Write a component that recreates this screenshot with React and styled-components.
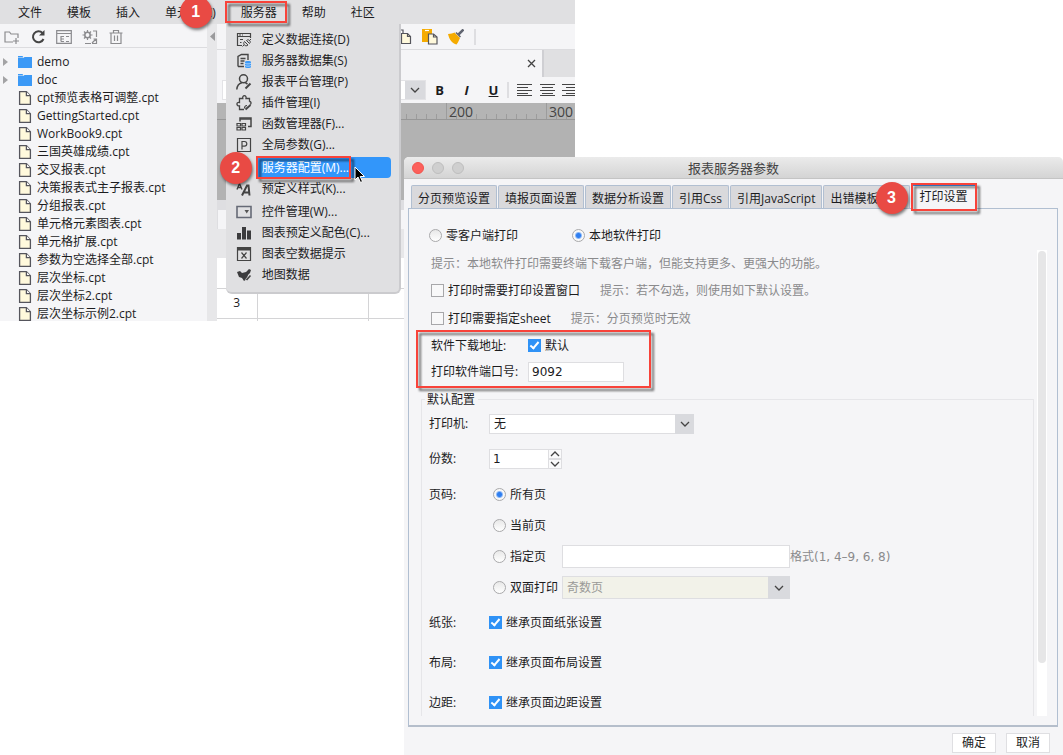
import React, { useState } from 'react';
import styled, { createGlobalStyle, css } from 'styled-components';

const GlobalStyle = createGlobalStyle`
  * {
    box-sizing: border-box;
  }
  body {
    margin: 0;
    background: #fff;
  }
  body, button, input, select {
    font-family: 'Open Sans', 'Noto Sans CJK SC', sans-serif;
    font-size: 12px;
    color: #1c1c1e;
  }
  svg {
    display: block;
    flex: none;
  }
`;

const Page = styled.div`
  position: relative;
  min-height: 100vh;
  line-height: 18px;
`;

/* ---------- annotations ---------- */

const Marker = styled.span`
  position: absolute;
  z-index: 3;
  display: flex;
  align-items: center;
  justify-content: center;
  width: 32px;
  height: 32px;
  border-radius: 50%;
  background: #e94a44;
  box-shadow: 1px 2px 3px rgba(0, 0, 0, 0.5);
  color: #fff;
  font: bold 16px 'Liberation Sans', sans-serif;
  left: ${(p) => p.$left}px;
  top: ${(p) => p.$top}px;
`;

const Outline = styled.span`
  position: absolute;
  z-index: 2;
  inset: ${(p) => p.$inset};
  width: ${(p) => (p.$width ? `${p.$width}px` : 'auto')};
  border: 2px solid #f8433a;
  filter: drop-shadow(3px 3px 1px rgba(0, 0, 0, 0.55));
  pointer-events: none;
`;

/* ---------- designer window ---------- */

const Designer = styled.div`
  display: flex;
  flex-direction: column;
  width: 54.1%;
  height: 321px;
  overflow: hidden;
  background: #f5f5f7;
`;

const MenuBar = styled.nav`
  position: relative;
  z-index: 2;
  display: flex;
  flex: none;
  gap: 25px;
  height: 24px;
  padding-left: 18px;
  background: #e0e0e2;
`;

const MenuSlot = styled.div`
  position: relative;
  display: flex;
`;

const MenuButton = styled.button`
  padding: 1px 0 0;
  border: 0;
  background: none;
  line-height: 23px;
  white-space: nowrap;
`;

const Dropdown = styled.div`
  position: absolute;
  top: 24px;
  left: -15px;
  width: 175px;
  padding: 5px 8px 7px 0;
  border: solid #cbcbce;
  border-width: 0 2px 2px 0;
  border-radius: 0 0 6px 6px;
  background: #e0e0e2;
  display: flex;
  flex-direction: column;
  gap: 2px;
`;

const MenuRow = styled.div`
  position: relative;
  display: flex;
  align-items: center;
  height: 21px;
  padding-left: 10px;
`;

const MenuIcon = styled.span`
  width: 22px;
  flex: none;
`;

const MenuEntry = styled.button`
  flex: 1;
  height: 21px;
  padding: 0 0 0 4px;
  border: 0;
  border-radius: 0 4px 4px 0;
  background: ${(p) => (p.$active ? '#3296fa' : 'none')};
  color: ${(p) => (p.$active ? '#fff' : '#1c1c1e')};
  text-align: left;
  white-space: nowrap;
  line-height: 21px;
`;

const Cursor = styled.svg`
  position: absolute;
  z-index: 3;
  left: 128px;
  top: 9px;
`;

const Workspace = styled.div`
  display: flex;
  flex: 1;
  min-height: 0;
`;

const Sidebar = styled.aside`
  width: 207px;
  flex: none;
`;

const SideTools = styled.div`
  display: flex;
  align-items: center;
  gap: 10px;
  height: 24px;
  padding: 2px 0 0 4px;
  border-bottom: 1px solid #dcdcdf;
`;

const ToolButton = styled.button`
  display: flex;
  align-items: center;
  justify-content: center;
  width: ${(p) => p.$width || 16}px;
  flex: none;
  padding: 0;
  border: 0;
  background: none;
  font-size: 13px;
`;

const Tree = styled.ul`
  margin: 0;
  padding: 5px 0 0;
  list-style: none;
`;

const TreeItem = styled.li`
  display: flex;
  align-items: center;
  height: 18px;
  white-space: nowrap;
`;

const Twisty = styled.span`
  width: 18px;
  padding-left: 3px;
`;

const FileIcon = styled.span`
  width: 19px;
`;

const Splitter = styled.div`
  display: flex;
  justify-content: center;
  width: 10px;
  flex: none;
  padding-top: 8px;
  background: #e7e7e9;
`;

const Editor = styled.main`
  display: flex;
  flex-direction: column;
  flex: 1;
  min-width: 0;
  overflow: hidden;
`;

const EditorTools = styled.div`
  display: flex;
  align-items: center;
  gap: 10px;
  height: 26px;
  flex: none;
  padding-left: 179px;
  border-bottom: 1px solid #dcdcdf;
`;

const Divider = styled.span`
  width: 2px;
  height: 16px;
  flex: none;
  background: #dedee1;
`;

const DocTabs = styled.div`
  display: flex;
  height: 27px;
  flex: none;
  background: #e0e0e2;
`;

const DocTab = styled.div`
  display: flex;
  align-items: center;
  justify-content: flex-end;
  width: 327px;
  flex: none;
  padding-right: 3px;
  border-right: 2px solid #cfcfd3;
  background: #f5f5f7;
`;

const FormatBar = styled.div`
  display: flex;
  align-items: center;
  height: 26px;
  flex: none;
  padding-left: 5px;
  color: #333;
`;

const FontBox = styled.div`
  display: flex;
  justify-content: flex-end;
  width: 204px;
  height: 20px;
  flex: none;
  border: 1px solid #e3e3e6;
  background: #fff;
`;

const DropButton = styled.button`
  display: flex;
  align-items: center;
  justify-content: center;
  width: 20px;
  padding: 0;
  border: 0;
  background: #d9dade;
`;

const Ruler = styled.div`
  display: flex;
  justify-content: flex-end;
  height: 17px;
  flex: none;
  border-bottom: 1px solid #979797;
  background: #b4b4b4;
  color: #444;
`;

const RulerMark = styled.span`
  width: ${(p) => p.$width}px;
  flex: none;
  padding-left: 2px;
  border-left: 1px solid #9c9c9c;
  background: repeating-linear-gradient(90deg, transparent 0 9px, #9c9c9c 9px 10px) left bottom / 100% 5px no-repeat;
  font-size: 14px;
  line-height: 17px;
`;

const Canvas = styled.div`
  height: 80px;
  flex: none;
  background: #b2b2b2;
`;

const SheetBar = styled.div`
  height: 29px;
  flex: none;
  padding: 10px 0 0 1px;
  background: #dedee1;
`;

const SheetInput = styled.div`
  height: 19px;
  background: #f5f5f7;
`;

const Sheet = styled.table`
  width: 480px;
  flex: none;
  border-collapse: collapse;
  table-layout: fixed;
  background: #fff;

  th, td {
    height: 30px;
    padding: 0;
    border: solid #d4d4d6;
    border-width: 0 1px 1px 0;
    font-weight: normal;
  }
  thead th {
    height: 29px;
    background: #e7e7e9;
    border: 0;
  }
`;

/* ---------- dialog ---------- */

const Dialog = styled.section`
  position: absolute;
  z-index: 4;
  top: 157px;
  right: 0;
  bottom: 0;
  left: 404px;
  display: flex;
  flex-direction: column;
  min-height: 598px;
  border-radius: 5px 5px 0 0;
  background: #f5f5f7;
`;

const TitleBar = styled.header`
  position: relative;
  height: 22px;
  flex: none;
  border-bottom: 1px solid #c4c4c4;
  border-radius: 5px 5px 0 0;
  background: linear-gradient(#ebebeb, #d4d4d4);
  color: #444;
  font-size: 13px;
  line-height: 22px;
  text-align: center;
`;

const Lights = styled.div`
  position: absolute;
  top: 5px;
  left: 8px;
  display: flex;
  gap: 8px;
`;

const Light = styled.button`
  width: 12px;
  height: 12px;
  padding: 0;
  border: 1px solid ${(p) => (p.$close ? '#f2544d' : '#bebebe')};
  border-radius: 50%;
  background: ${(p) => (p.$close ? '#fc605b' : '#cfcfcf')};
`;

const TabBar = styled.div`
  display: flex;
  align-items: flex-end;
  gap: 1px;
  height: 29px;
  flex: none;
  padding: 0 6px 0 7px;
`;

const tabActive = css`
  z-index: 1;
  height: 25px;
  margin-bottom: -1px;
  padding: 0 8px 4px;
  border-top: 2px solid #3c8ae0;
  background: #f5f5f7;
`;

const Tab = styled.button`
  position: relative;
  height: 23px;
  padding: 2px 6px 0;
  border: 1px solid #b1bfd1;
  border-bottom: 0;
  border-radius: 2px 2px 0 0;
  background: #d9d9dc;
  white-space: nowrap;
  ${(p) => p.$active && tabActive}
`;

const Panel = styled.div`
  display: flex;
  flex-direction: column;
  flex: 1;
  min-height: 0;
  margin: 0 5px 0 4px;
  padding: 12px 10px 9px 0;
  border: 1px solid #b1bfd1;
  border-bottom: 2px solid #b5becb;
`;

const ModeRow = styled.div`
  display: flex;
  align-items: center;
  gap: 54px;
  height: 29px;
  flex: none;
  padding-left: 20px;
`;

const ScrollArea = styled.div`
  display: flex;
  flex: 1;
  min-height: 0;
  padding-left: 12px;
  overflow: hidden;
`;

const ScrollContent = styled.div`
  flex: 1;
  min-width: 0;
`;

const Scrollbar = styled.div`
  width: 10px;
  flex: none;
  margin-left: 3px;
  padding: 1px;
  background: #fff;
`;

const Thumb = styled.div`
  height: 412px;
  border-radius: 4px;
  background: #e6e6e7;
`;

const OptionRow = styled.div`
  display: flex;
  align-items: center;
  gap: 20px;
  height: ${(p) => p.$height}px;
  padding-left: 10px;
  white-space: nowrap;
`;

const Hint = styled.span`
  color: #8a8a8c;
`;

const Marked = styled.div`
  position: relative;
`;

const CaptionRow = styled.div`
  display: flex;
  align-items: center;
  height: 26px;
  padding-left: 10px;
`;

const Caption = styled.label`
  width: ${(p) => p.$width}px;
  flex: none;
`;

const CheckLabel = styled.label`
  display: flex;
  align-items: center;
  gap: 4px;
  white-space: nowrap;
`;

const RadioInput = styled.input.attrs({ type: 'radio' })`
  appearance: none;
  width: 13px;
  height: 13px;
  flex: none;
  margin: 0;
  border: 1px solid #a9a9ab;
  border-radius: 50%;
  background: linear-gradient(#e8e8e8, #fff);

  &:checked {
    background: radial-gradient(circle, #2f7ef0 0 2px, #8db9f7 3px, #f8f8f8 4px);
  }
`;

const CheckInput = styled.input.attrs({ type: 'checkbox' })`
  appearance: none;
  position: relative;
  width: 13px;
  height: 13px;
  flex: none;
  margin: 0 0 1px;
  border: 1px solid #a7a7aa;
  background: #f8f8f9;

  &:checked {
    border-color: #2f92f6;
    background: #2f92f6;
  }
  &:checked::after {
    content: '';
    box-sizing: border-box;
    position: absolute;
    left: 3px;
    top: 0;
    width: 5px;
    height: 9px;
    border: solid #fff;
    border-width: 0 2px 2px 0;
    transform: rotate(40deg);
  }
`;

const TextInput = styled.input`
  width: ${(p) => p.$width}px;
  height: ${(p) => p.$height || 20}px;
  padding: 0 3px;
  border: 1px solid #dedee1;
  background: #fff;
  font-family: 'DejaVu Sans', 'Noto Sans CJK SC', sans-serif;
  outline: none;
`;

const Group = styled.fieldset`
  min-width: 0;
  margin: 7px 0 0;
  padding: 0 0 0 7px;
  border: 1px solid #e6e6e9;
`;

const Legend = styled.legend`
  height: 14px;
  margin-left: -4px;
  padding: 0 3px 0 2px;
  line-height: 16px;
`;

const FieldRow = styled.div`
  display: flex;
  align-items: center;
  height: ${(p) => p.$height}px;
`;

const PageRange = styled.div`
  display: flex;
  padding-top: 3px;
`;

const RangeCaption = styled.span`
  width: 60px;
  flex: none;
  line-height: 31px;
`;

const RangeRow = styled.div`
  display: flex;
  align-items: center;
  height: 31px;
  padding-left: 4px;
`;

const RangeLabel = styled(CheckLabel)`
  width: 69px;
`;

const Format = styled(Hint)`
  font-family: 'DejaVu Sans', 'Noto Sans CJK SC', sans-serif;
`;

const SelectWrap = styled.div`
  position: relative;
  width: ${(p) => p.$width}px;
  height: ${(p) => p.$height}px;
`;

const Select = styled.select`
  appearance: none;
  width: 100%;
  height: 100%;
  padding: 0 4px;
  border: 1px solid #dedee1;
  border-radius: 0;
  background: #fff;
  opacity: 1;

  &:disabled {
    background: #f2f2e9;
    color: #9a9a98;
  }
`;

const SelectArrow = styled.span`
  position: absolute;
  top: 0;
  right: 0;
  display: flex;
  align-items: center;
  justify-content: center;
  width: ${(p) => p.$width}px;
  height: 100%;
  background: #d9dade;
  pointer-events: none;
`;

const Spinner = styled.div`
  display: flex;
  flex-direction: column;
  height: 20px;
`;

const SpinButton = styled.button`
  display: flex;
  align-items: center;
  justify-content: center;
  width: 13px;
  height: 10px;
  padding: 0;
  border: 1px solid #dedee1;
  border-left: 0;
  background: #fafafb;
`;

const Footer = styled.footer`
  display: flex;
  justify-content: flex-end;
  gap: 10px;
  height: 28px;
  flex: none;
  padding: 6px 13px 0 0;
`;

const DialogButton = styled.button`
  width: 44px;
  height: 20px;
  padding: 0;
  border: 1px solid #dfdfe2;
  background: #fff;
  line-height: 18px;
`;

/* ---------- icons ---------- */

const Icon = ({ size = 16, color = '#444', children }) => (
  <svg width={size} height={size} viewBox="0 0 16 16" fill="none" stroke={color} strokeWidth="1.2">
    {children}
  </svg>
);

const Chevron = ({ up }) => (
  <svg width="10" height="6" viewBox="0 0 10 6" fill="none" stroke="#444" strokeWidth="1.3">
    <path d={up ? 'M1 5l4-4 4 4' : 'M1 1l4 4 4-4'} />
  </svg>
);

const FolderGlyph = () => (
  <svg width="15" height="14" viewBox="0 0 15 14" fill="#3b99f6">
    <path d="M0 1h4.5l1 1.5H0z" />
    <path d="M0 3h5.5l1-1H14v11H0z" />
  </svg>
);

const FileGlyph = () => (
  <svg width="14" height="14" viewBox="0 0 14 14" fill="#fff9dc" stroke="#55555c" strokeWidth="1.3">
    <path d="M1.6.7h6.8l4 4v8.6H1.6z" />
    <path d="M8.4.7v4h4" fill="#fff" />
  </svg>
);

const menuIcons = {
  link: (
    <Icon>
      <path d="M6 13.5H1.5v-12h13V6M1.5 4.5h13M4 7.500h3M4 10.500h1.500" />
      <path d="M3 3h2M6 3h1" />
      <path d="M6.500 14.500l1.500-1.500M8.500 9.500l3.500 3.500c-1.200 1.200-2.800 1-3.600 0s-1-2.300.1-3.500zM10.500 8.500l3 3c1-1 1-2.200.1-3s-2.100-1-3.100 0zM13.500 8.500l1.500-1.500" strokeWidth="1" />
    </Icon>
  ),
  dataset: (
    <Icon>
      <path d="M2 13.500v-10l3.500-2H12V7M2 13.500h6M4.500 5.500h5M4.500 8h4M4.500 10.500h3" strokeWidth="1.400" />
      <path d="M9 9c0-1.300 6-1.300 6 0v5c0 1.300-6 1.300-6 0z" fill="#3b99f6" stroke="none" />
      <path d="M9 10.200c1 .9 5 .9 6 0M9 12.500c1 .9 5 .9 6 0" stroke="#d9eafc" strokeWidth=".7" />
    </Icon>
  ),
  user: (
    <Icon>
      <circle cx="7.500" cy="4.800" r="4" strokeWidth="1.500" />
      <path d="M.8 15.500c.3-3.500 2.300-6 5-6.700M9.500 8.800l2 1.200" strokeWidth="1.500" />
      <path d="M9.500 14.500l5-5" strokeWidth="2" />
    </Icon>
  ),
  plugin: (
    <Icon>
      <path d="M8 14.500H3.500v-3.700c-3.200.9-3.600-4.300 0-3.300V3.500H6.800c-1-3.800 4.200-3.800 3.200 0h3.500v3.200M13.500 6.500c2 0 2 2.500.5 3" strokeWidth="1.300" />
      <path d="M9.500 14.500l5-4.500" strokeWidth="1.800" />
      <path d="M8.500 13.500c0-2 1-3 2.500-3" />
    </Icon>
  ),
  func: (
    <Icon>
      <path d="M4 5.500V2h11v8.500h-3" strokeWidth="1.500" />
      <path d="M4 3h11" strokeWidth="1.500" />
      <path d="M1 7.500h3.500v2.500H1zM6 7.500h3.500v2.500H6zM1 11.500h3.500V14H1zM6 11.500h3.500V14H6z" />
    </Icon>
  ),
  param: (
    <Icon>
      <path d="M1.500 1.500h13v13h-13z" />
      <path d="M6 12.500V4.500h2.500a2.300 2.300 0 010 4.600H6" />
    </Icon>
  ),
  style: (
    <Icon>
      <path d="M1 8.500L3.500 2.500 6 8.500M2 6.500h3" strokeWidth="1.400" />
      <path d="M6 14.500l5-10h1.500l1 10M8 11.500h5.500" strokeWidth="2" />
    </Icon>
  ),
  widget: (
    <Icon color="#666a76">
      <path d="M1 2.500h14v11H1z" strokeWidth="1.600" />
      <path d="M8.500 6h4.500l-2.250 3.500z" fill="#555" stroke="none" />
    </Icon>
  ),
  chart: (
    <Icon>
      <path d="M1 8h4v6.500H1zM6 2h4v12.500H6zM11 5.500h4v9h-4z" fill="#3c3c3e" stroke="none" />
    </Icon>
  ),
  empty: (
    <Icon>
      <path d="M1.500 1.500h13v13h-13z" />
      <path d="M1.500 3h13" strokeWidth="3" />
      <path d="M5.500 6.500l5 6M10.500 6.500l-5 6" />
    </Icon>
  ),
  map: (
    <Icon>
      <path d="M1 5l3-1 2 2 4-1 3-3 2 1-1 3-2 2-1 4-3 2-2-3-3-1z" fill="#3c3c3e" stroke="none" />
      <path d="M9.500 12.500l4-4.500" stroke="#e0e0e2" strokeWidth="1" />
      <path d="M10.500 13l4-4.500" strokeWidth="1.600" />
    </Icon>
  ),
};

const AlignGlyph = ({ d }) => (
  <svg width="15" height="12" viewBox="0 0 15 12" stroke="#444" strokeWidth="1">
    <path d={d} />
  </svg>
);

/* ---------- data ---------- */

const menuGroups = [
  [
    ['link', '定义数据连接(D)'],
    ['dataset', '服务器数据集(S)'],
    ['user', '报表平台管理(P)'],
    ['plugin', '插件管理(I)'],
    ['func', '函数管理器(F)...'],
    ['param', '全局参数(G)...'],
  ],
  [
    ['', '服务器配置(M)...'],
    ['style', '预定义样式(K)...'],
  ],
  [
    ['widget', '控件管理(W)...'],
    ['chart', '图表预定义配色(C)...'],
    ['empty', '图表空数据提示'],
    ['map', '地图数据'],
  ],
];

const folders = ['demo', 'doc'];

const files = [
  'cpt预览表格可调整.cpt',
  'GettingStarted.cpt',
  'WorkBook9.cpt',
  '三国英雄成绩.cpt',
  '交叉报表.cpt',
  '决策报表式主子报表.cpt',
  '分组报表.cpt',
  '单元格元素图表.cpt',
  '单元格扩展.cpt',
  '参数为空选择全部.cpt',
  '层次坐标.cpt',
  '层次坐标2.cpt',
  '层次坐标示例2.cpt',
];

const tabs = ['分页预览设置', '填报页面设置', '数据分析设置', '引用Css', '引用JavaScript', '出错模板定义', '打印设置'];

const inheritRows = [
  ['纸张:', '继承页面纸张设置'],
  ['布局:', '继承页面布局设置'],
  ['边距:', '继承页面边距设置'],
];

/* ---------- components ---------- */

function ServerMenu() {
  return (
    <Dropdown>
      {menuGroups.map((group, i) => (
        <div key={i}>
          {group.map(([icon, text]) => {
            const active = text.startsWith('服务器配置');
            return (
              <MenuRow key={text}>
                <MenuIcon>{menuIcons[icon]}</MenuIcon>
                <MenuEntry $active={active}>{text}</MenuEntry>
                {active && (
                  <>
                    <Outline $inset="-1px 40px -1px 30px" />
                    <Marker $left={-6} $top={-5}>2</Marker>
                    <Cursor width="12" height="18" viewBox="0 0 12 18" fill="#000" stroke="#fff">
                      <path d="M1 1v13l3-3 2.500 5.500 2-1L6.200 10.500h4.300z" />
                    </Cursor>
                  </>
                )}
              </MenuRow>
            );
          })}
        </div>
      ))}
    </Dropdown>
  );
}

function FileTree() {
  return (
    <Sidebar>
      <SideTools>
        <ToolButton aria-label="新建目录">
          <Icon color="#8b8b8e">
            <path d="M9 13H1V3h4.500l1.500 2h7v4M12 9v6M9 12h6" />
          </Icon>
        </ToolButton>
        <ToolButton aria-label="刷新">
          <Icon color="#444">
            <path d="M12.500 4A5.500 5.500 0 1013.500 10" strokeWidth="2" />
            <path d="M14.500 1v5.500H9z" fill="#444" stroke="none" />
          </Icon>
        </ToolButton>
        <ToolButton aria-label="展开">
          <Icon color="#8b8b8e">
            <path d="M.7 1.700h14.600v12.600H.7zM.7 4.500h14.600M5 7v5.500M5 7.500h3M5 10h3M5 12.500h3M10 7.500h3M10 12.500h3" />
          </Icon>
        </ToolButton>
        <ToolButton aria-label="设置">
          <Icon color="#8b8b8e">
            <circle cx="5.500" cy="6" r="2.700" strokeWidth="1.600" />
            <path d="M5.500 1v2M5.500 9v2M.5 6h2M8.500 6h2M2 2.500l1.500 1.500M9 2.500L7.500 4M2 9.500L3.500 8M9 9.500L7.500 8M11 2h3.500v6M3 14.500h6M10 14.500h4.500V10h-3M10 14l4-4" />
          </Icon>
        </ToolButton>
        <ToolButton aria-label="删除">
          <Icon color="#8b8b8e">
            <path d="M1.500 4h13M5.500 4V1.500h5V4M3 4v10.500h10V4M6.500 6.500v5.500M9.500 6.500v5.500" />
          </Icon>
        </ToolButton>
      </SideTools>
      <Tree>
        {folders.map((name) => (
          <TreeItem key={name}>
            <Twisty>
              <svg width="5" height="8" viewBox="0 0 5 8" fill="#a3a3a5"><path d="M0 0l5 4-5 4z" /></svg>
            </Twisty>
            <FileIcon><FolderGlyph /></FileIcon>
            {name}
          </TreeItem>
        ))}
        {files.map((name) => (
          <TreeItem key={name}>
            <Twisty />
            <FileIcon><FileGlyph /></FileIcon>
            {name}
          </TreeItem>
        ))}
      </Tree>
    </Sidebar>
  );
}

function ReportEditor() {
  return (
    <Editor>
      <EditorTools>
        <ToolButton aria-label="复制">
          <Icon color="#55555c">
            <path d="M1 1h6v10H1z" fill="#fff" />
            <path d="M5.500 4.500h6l3 3v7h-9z" fill="#fff9dc" />
            <path d="M11.500 4.500v3h3" />
          </Icon>
        </ToolButton>
        <ToolButton aria-label="粘贴">
          <Icon color="#55555c">
            <path d="M0 0h10v13H0z" fill="#f5ab00" stroke="none" />
            <path d="M3 1.500h4" stroke="#fff" />
            <path d="M6.500 5h5l3.500 3v7H6.500z" fill="#fff9dc" />
            <path d="M11.500 5v3H15" />
          </Icon>
        </ToolButton>
        <ToolButton aria-label="格式刷">
          <Icon color="#606470">
            <path d="M0 5c3 0 5-1 6.500-1.500L12 9c-1 2-1.500 4-3.500 6.500C4.500 15 1 10 0 5z" fill="#f5ab00" stroke="none" />
            <path d="M8 3.500l4.500 4.500" stroke="#606470" strokeWidth="1.500" />
            <path d="M15.500 .5l-5 5" strokeWidth="2.500" />
          </Icon>
        </ToolButton>
        <Divider />
      </EditorTools>
      <DocTabs>
        <DocTab>
          <ToolButton aria-label="关闭">
            <svg width="9" height="9" viewBox="0 0 9 9" stroke="#444" strokeWidth="1.300">
              <path d="M1 1l7 7M8 1L1 8" />
            </svg>
          </ToolButton>
        </DocTab>
      </DocTabs>
      <FormatBar>
        <FontBox>
          <DropButton aria-label="字体"><Chevron /></DropButton>
        </FontBox>
        <ToolButton $width={27}><b>B</b></ToolButton>
        <ToolButton $width={27}><b><i>I</i></b></ToolButton>
        <ToolButton $width={27}><b><u>U</u></b></ToolButton>
        <Divider />
        <ToolButton $width={31} aria-label="左对齐"><AlignGlyph d="M0 .5h15M0 3.500h11M0 6.500h15M0 9.500h11M0 11.500h15" /></ToolButton>
        <ToolButton $width={15} aria-label="居中"><AlignGlyph d="M0 .5h15M2 3.500h11M0 6.500h15M2 9.500h11M0 11.500h15" /></ToolButton>
        <ToolButton $width={29} aria-label="右对齐"><AlignGlyph d="M0 .5h15M4 3.500h11M0 6.500h15M4 9.500h11M0 11.500h15" /></ToolButton>
      </FormatBar>
      <Ruler>
        <RulerMark $width={100} />
        <RulerMark $width={100}>200</RulerMark>
        <RulerMark $width={29}>300</RulerMark>
      </Ruler>
      <Canvas />
      <SheetBar><SheetInput /></SheetBar>
      <Sheet>
        <colgroup>
          <col width="40" />
          <col width="111" />
          <col />
        </colgroup>
        <thead>
          <tr><th /><th /><th /></tr>
        </thead>
        <tbody>
          <tr><th /><td /><td /></tr>
          <tr><th>3</th><td /><td /></tr>
          <tr><th /><td /><td /></tr>
        </tbody>
      </Sheet>
    </Editor>
  );
}

function PrintDefaults() {
  const [range, setRange] = useState('all');
  const radio = (value) => (
    <RadioInput name="range" checked={range === value} onChange={() => setRange(value)} />
  );

  return (
    <Group>
      <Legend>默认配置</Legend>
      <FieldRow $height={35}>
        <Caption $width={60} htmlFor="printer">打印机:</Caption>
        <SelectWrap $width={205} $height={20}>
          <Select id="printer"><option>无</option></Select>
          <SelectArrow $width={19}><Chevron /></SelectArrow>
        </SelectWrap>
      </FieldRow>
      <FieldRow $height={35}>
        <Caption $width={60} htmlFor="copies">份数:</Caption>
        <TextInput id="copies" $width={60} defaultValue="1" />
        <Spinner>
          <SpinButton aria-label="增加"><Chevron up /></SpinButton>
          <SpinButton aria-label="减少"><Chevron /></SpinButton>
        </Spinner>
      </FieldRow>
      <PageRange>
        <RangeCaption>页码:</RangeCaption>
        <div>
          <RangeRow><RangeLabel>{radio('all')}所有页</RangeLabel></RangeRow>
          <RangeRow><RangeLabel>{radio('current')}当前页</RangeLabel></RangeRow>
          <RangeRow>
            <RangeLabel>{radio('custom')}指定页</RangeLabel>
            <TextInput $width={228} $height={23} aria-label="指定页" />
            <Format>格式(1, 4–9, 6, 8)</Format>
          </RangeRow>
          <RangeRow>
            <RangeLabel>{radio('duplex')}双面打印</RangeLabel>
            <SelectWrap $width={228} $height={23}>
              <Select disabled aria-label="双面打印"><option>奇数页</option></Select>
              <SelectArrow $width={22}><Chevron /></SelectArrow>
            </SelectWrap>
          </RangeRow>
        </div>
      </PageRange>
      {inheritRows.map(([caption, text]) => (
        <FieldRow key={caption} $height={40}>
          <Caption as="span" $width={60}>{caption}</Caption>
          <CheckLabel>
            <CheckInput defaultChecked />
            {text}
          </CheckLabel>
        </FieldRow>
      ))}
    </Group>
  );
}

function ServerDialog() {
  return (
    <Dialog role="dialog" aria-label="报表服务器参数">
      <TitleBar>
        <Lights>
          <Light $close aria-label="关闭" />
          <Light aria-label="最小化" />
          <Light aria-label="最大化" />
        </Lights>
        报表服务器参数
      </TitleBar>
      <TabBar>
        {tabs.map((name) => (
          <Tab key={name} $active={name === '打印设置'}>
            {name}
            {name === '打印设置' && (
              <>
                <Outline $inset="-3px -1px -2px -1px" />
                <Marker $left={-36} $top={-4}>3</Marker>
              </>
            )}
          </Tab>
        ))}
      </TabBar>
      <Panel>
        <ModeRow>
          <CheckLabel><RadioInput name="mode" />零客户端打印</CheckLabel>
          <CheckLabel><RadioInput name="mode" defaultChecked />本地软件打印</CheckLabel>
        </ModeRow>
        <ScrollArea>
          <ScrollContent>
            <OptionRow $height={27}>
              <Hint>提示：本地软件打印需要终端下载客户端，但能支持更多、更强大的功能。</Hint>
            </OptionRow>
            <OptionRow $height={28}>
              <CheckLabel><CheckInput />打印时需要打印设置窗口</CheckLabel>
              <Hint>提示：若不勾选，则使用如下默认设置。</Hint>
            </OptionRow>
            <OptionRow $height={28}>
              <CheckLabel><CheckInput />打印需要指定sheet</CheckLabel>
              <Hint>提示：分页预览时无效</Hint>
            </OptionRow>
            <Marked>
              <CaptionRow>
                <Caption as="span" $width={97}>软件下载地址:</Caption>
                <CheckLabel><CheckInput defaultChecked />默认</CheckLabel>
              </CaptionRow>
              <CaptionRow>
                <Caption $width={97} htmlFor="port">打印软件端口号:</Caption>
                <TextInput id="port" $width={96} defaultValue="9092" />
              </CaptionRow>
              <Outline $inset="-3px auto -3px -5px" $width={235} />
            </Marked>
            <PrintDefaults />
          </ScrollContent>
          <Scrollbar><Thumb /></Scrollbar>
        </ScrollArea>
      </Panel>
      <Footer>
        <DialogButton>确定</DialogButton>
        <DialogButton>取消</DialogButton>
      </Footer>
    </Dialog>
  );
}

export default function App() {
  return (
    <Page>
      <GlobalStyle />
      <Designer>
        <MenuBar>
          <MenuButton>文件</MenuButton>
          <MenuButton>模板</MenuButton>
          <MenuButton>插入</MenuButton>
          <MenuButton>单元格(C)</MenuButton>
          <MenuSlot>
            <MenuButton>服务器</MenuButton>
            <Outline $inset="1px -10px 1px -16px" />
            <Marker $left={-61} $top={-4}>1</Marker>
            <ServerMenu />
          </MenuSlot>
          <MenuButton>帮助</MenuButton>
          <MenuButton>社区</MenuButton>
        </MenuBar>
        <Workspace>
          <FileTree />
          <Splitter>
            <svg width="5" height="9" viewBox="0 0 5 9" fill="#9a9a9c"><path d="M5 0v9L0 4.500z" /></svg>
          </Splitter>
          <ReportEditor />
        </Workspace>
      </Designer>
      <ServerDialog />
    </Page>
  );
}
